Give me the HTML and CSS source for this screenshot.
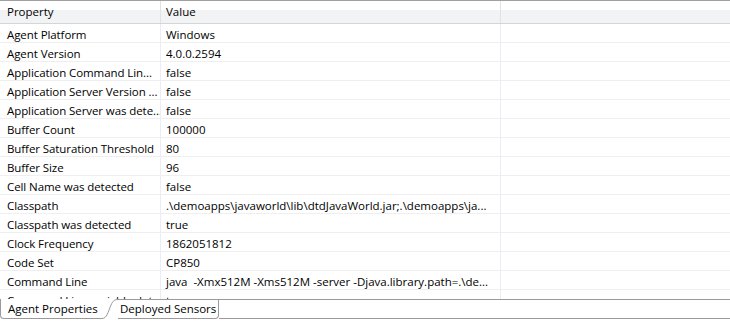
FILE: index.html
```html
<!DOCTYPE html>
<html>
<head>
    <meta charset="UTF-8">
    <link rel="stylesheet" href="styles.css">
</head>
<body>
    <div class="view">
        <div class="table-area">
            <div class="header">
                <div class="hcell">Property</div>
                <div class="hcell">Value</div>
                <div class="hcell last"></div>
            </div>
            <div class="row"><div class="cell">Agent Platform</div><div class="cell val">Windows</div><div class="cell"></div></div>
            <div class="row"><div class="cell">Agent Version</div><div class="cell val">4.0.0.2594</div><div class="cell"></div></div>
            <div class="row"><div class="cell">Application Command Lin...</div><div class="cell val">false</div><div class="cell"></div></div>
            <div class="row"><div class="cell">Application Server Version ...</div><div class="cell val">false</div><div class="cell"></div></div>
            <div class="row"><div class="cell">Application Server was dete...</div><div class="cell val">false</div><div class="cell"></div></div>
            <div class="row"><div class="cell">Buffer Count</div><div class="cell val">100000</div><div class="cell"></div></div>
            <div class="row"><div class="cell">Buffer Saturation Threshold</div><div class="cell val">80</div><div class="cell"></div></div>
            <div class="row"><div class="cell">Buffer Size</div><div class="cell val">96</div><div class="cell"></div></div>
            <div class="row"><div class="cell">Cell Name was detected</div><div class="cell val">false</div><div class="cell"></div></div>
            <div class="row"><div class="cell">Classpath</div><div class="cell val">.\demoapps\javaworld\lib\dtdJavaWorld.jar;.\demoapps\ja...</div><div class="cell"></div></div>
            <div class="row"><div class="cell">Classpath was detected</div><div class="cell val">true</div><div class="cell"></div></div>
            <div class="row"><div class="cell">Clock Frequency</div><div class="cell val">1862051812</div><div class="cell"></div></div>
            <div class="row"><div class="cell">Code Set</div><div class="cell val">CP850</div><div class="cell"></div></div>
            <div class="row"><div class="cell">Command Line</div><div class="cell val">java&nbsp; -Xmx512M -Xms512M -server -Djava.library.path=.\de...</div><div class="cell"></div></div>
            <div class="row"><div class="cell">Command Line variable det...</div><div class="cell val">true</div><div class="cell"></div></div>
        </div>
        <div class="tabs">
            <div class="tab active">Agent Properties</div>
            <svg class="tab-curve" width="18" height="20" viewBox="0 0 18 20">
                <path d="M0 19.5 H2 C7 19.5 8 13 11 6 C13 1.5 15 0.5 18 0.5" fill="none" stroke="#9a9a9a" stroke-width="1"/>
            </svg>
            <div class="tab">Deployed Sensors</div>
            <div class="tab-fill"></div>
        </div>
    </div>
</body>
</html>
```

FILE: styles.css
```css
body {
    margin: 0;
    padding: 0;
    background: #fff;
    font-family: "Segoe UI", "Open Sans", sans-serif;
    font-size: 11.5px;
    color: #000;
}

.view {
    width: 730px;
    height: 321px;
    overflow: hidden;
}

.table-area {
    height: 299px;
    overflow: hidden;
    border-top: 1px solid #a0a0a0;
    box-sizing: border-box;
}

.header,
.row {
    display: grid;
    grid-template-columns: 161px 340px 1fr;
}

.header {
    height: 23px;
    border-bottom: 1px solid #d5d5d5;
    box-sizing: border-box;
    background: linear-gradient(#fff 0, #fff 40%, #f2f3f5 41%, #f2f3f5 100%);
}

.hcell {
    padding-left: 7px;
    line-height: 22px;
    border-right: 1px solid #e2e2e2;
}

.hcell:nth-child(2) {
    padding-left: 5px;
}

.hcell.last {
    border-right: none;
}

.row {
    height: 19px;
    border-bottom: 1px solid #efefef;
    box-sizing: border-box;
    overflow: hidden;
}

.cell {
    padding: 2px 0 0 7px;
    line-height: 18px;
    white-space: nowrap;
    overflow: hidden;
    letter-spacing: -0.08px;
    border-right: 1px solid #eaedf8;
}

.cell.val {
    padding-left: 5px;
    letter-spacing: 0;
}

.cell:last-child {
    border-right: none;
}

.tabs {
    display: flex;
    height: 20px;
}

.tab {
    line-height: 18px;
    white-space: nowrap;
    box-sizing: border-box;
    height: 20px;
}

.tab.active {
    width: 100px;
    padding: 1px 0 0 7px;
    border-left: 1px solid #9a9a9a;
    border-bottom: 1px solid #9a9a9a;
    border-bottom-left-radius: 4px;
}

.tab-curve {
    display: block;
    flex: none;
}

.tab:not(.active) {
    width: 101px;
    padding-left: 2px;
    border-top: 1px solid #9a9a9a;
    border-bottom: 1px solid #9a9a9a;
    border-right: 1px solid #9a9a9a;
    border-bottom-right-radius: 4px;
}

.tab-fill {
    flex: 1;
    border-top: 1px solid #9a9a9a;
    border-bottom: 1px solid #9a9a9a;
}
```
